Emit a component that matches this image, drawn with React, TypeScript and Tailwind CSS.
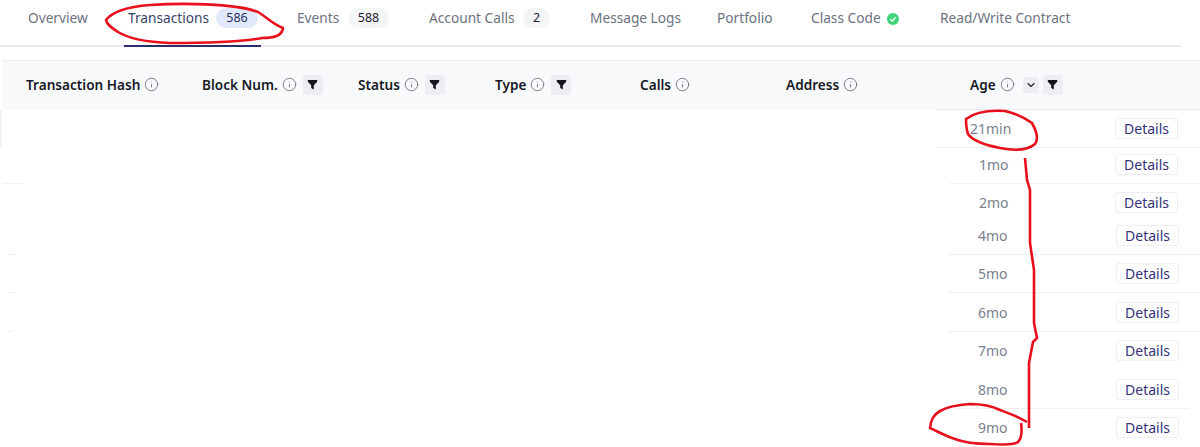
import { Info, ChevronDown } from "lucide-react";

const font = { fontFamily: '"Noto Sans", "Open Sans", sans-serif' };

function Funnel() {
  return (
    <span className="flex h-5 w-5 items-center justify-center rounded-[3px] bg-[#eceef2]">
      <svg width="11" height="11" viewBox="0 0 11 11">
        <path d="M0.8 1h9.4v1.8L6.8 6.2v4.3L4.2 9V6.2L0.8 2.8z" fill="#14161f" />
      </svg>
    </span>
  );
}

function Head({ label, filter, sort }: { label: string; filter?: boolean; sort?: boolean }) {
  return (
    <div className="flex items-center">
      <span className="text-[13.6px] font-semibold text-[#171a26]">{label}</span>
      <Info size={15} strokeWidth={1.4} className="ml-[4px] text-[#6b7080]" />
      {sort && (
        <span className="ml-[8px] flex h-4 w-4 items-center justify-center rounded-[3px] bg-[#eceef2]">
          <ChevronDown size={12} strokeWidth={2.2} className="text-[#1d2030]" />
        </span>
      )}
      {filter && <span className={sort ? "ml-1" : "ml-[6px]"}><Funnel /></span>}
    </div>
  );
}

function Count({ n, cls }: { n: string; cls: string }) {
  return <span className={`flex h-5 items-center justify-center rounded-full text-[12.5px] ${cls}`}>{n}</span>;
}

const rows = [
  { age: "21min", h: "h-[38px]", cls: "ml-[937px] border-b", txt: "ml-[33px]", btn: "mr-[22px]" },
  { age: "1mo", h: "h-[36px] pb-[2px]", cls: "ml-[950px] border-b", txt: "ml-[29px]", btn: "mr-[22px]" },
  { age: "2mo", h: "h-[37px]", cls: "ml-[950px]", txt: "ml-[29px]", btn: "mr-[22px]" },
  { age: "4mo", h: "h-[34px] pb-[4px]", cls: "ml-[949px] border-b", txt: "ml-[29px]", btn: "mr-[21px]" },
  { age: "5mo", h: "h-[38px]", cls: "ml-[949px] border-b", txt: "ml-[29px]", btn: "mr-[21px]" },
  { age: "6mo", h: "h-[39px]", cls: "ml-[949px] border-b", txt: "ml-[29px]", btn: "mr-[21px]" },
  { age: "7mo", h: "h-[39px] pb-[2px]", cls: "ml-[954px]", txt: "ml-[24px]", btn: "mr-[21px]" },
  { age: "8mo", h: "h-[38px]", cls: "ml-[954px] mr-[10px] border-b", txt: "ml-[24px]", btn: "mr-[11px]" },
  { age: "9mo", h: "h-[39px] pb-[2px]", cls: "ml-[949px]", txt: "ml-[29px]", btn: "mr-[21px]" },
];

export default function App() {
  return (
    <div className="relative h-[447px] w-[1200px] overflow-hidden bg-white" style={font}>
      <nav className="flex h-[47px] w-[1181px] gap-8 whitespace-nowrap border-b-2 border-[#e8e9ee] pl-6 text-[13.7px] text-[#6b7280]">
        <span className="w-[68px] px-1 pt-[8px]">Overview</span>
        <span className="-mb-[2px] flex h-[47px] w-[137px] items-start justify-between border-b-2 border-[#2b2f6e] pl-1 pr-[3px] pt-[8px] text-[#3a4468]">
          Transactions<Count n="586" cls="w-[42px] bg-[#e2e8fb] text-[#26305f]" />
        </span>
        <span className="flex w-[100px] items-start justify-between px-1 pt-[8px]">Events<Count n="588" cls="w-[41px] bg-[#f4f5f7] text-[#1d2030]" /></span>
        <span className="flex w-[129px] items-start justify-between px-1 pt-[8px]">Account Calls<Count n="2" cls="w-[27px] bg-[#f4f5f7] text-[#1d2030]" /></span>
        <span className="w-[95px] px-1 pt-[8px]">Message Logs</span>
        <span className="w-[62px] px-1 pt-[8px]">Portfolio</span>
        <span className="flex w-[97px] items-start justify-between pl-1 pr-[5px] pt-[8px]">
          Class Code
          <svg className="mt-[5px]" width="12" height="12" viewBox="0 0 12 12">
            <circle cx="6" cy="6" r="6" fill="#3ed47a" />
            <path d="M3.3 6.2l2 1.9 3.4-3.8" fill="none" stroke="#fff" strokeWidth="1.4" />
          </svg>
        </span>
        <span className="w-[139px] px-1 pt-[8px]">Read/Write Contract</span>
      </nav>

      <div className="ml-[2px] mt-[13px] grid h-[49px] grid-cols-[176px_156px_137px_145px_146px_184px_1fr] items-center border-t border-[#eff0f3] bg-[#f8f9fb] pl-6">
        <Head label="Transaction Hash" />
        <Head label="Block Num." filter />
        <Head label="Status" filter />
        <Head label="Type" filter />
        <Head label="Calls" />
        <Head label="Address" />
        <Head label="Age" sort filter />
      </div>

      <div className="ml-[937px] h-px bg-[#e8e9ee]" />
      <div>
        {rows.map((r) => (
          <div key={r.age} className={`flex items-center justify-between border-[#eceef1] ${r.h} ${r.cls}`}>
            <span className={`text-[14px] text-[#7b8190] ${r.txt}`}>{r.age}</span>
            <button className={`flex h-[21px] w-[63px] items-center justify-center rounded-[3px] border border-[#eceef2] bg-white text-[14px] text-[#35327a] ${r.btn}`}>
              Details
            </button>
          </div>
        ))}
      </div>

      <div className="absolute left-0 top-[109px] h-[39px] w-[2px] bg-[#f1f2f4]" />
      <div className="absolute left-[2px] top-[183px] h-px w-[21px] bg-[#eceef1]" />
      <div className="absolute left-[8px] top-[254px] h-px w-[8px] bg-[#eceef1]" />
      <div className="absolute left-[8px] top-[292px] h-px w-[8px] bg-[#eceef1]" />
      <div className="absolute left-[8px] top-[331px] h-px w-[5px] bg-[#eceef1]" />

      <svg className="pointer-events-none absolute inset-0" width="1200" height="447" viewBox="0 0 1200 447" fill="none" stroke="#e8101c" strokeWidth="2.6" strokeLinejoin="round">
        <path d="M106 20C112 12 125 7 150 5C180 3 235 3 258 12C268 18 272 24 283 28C282 36 274 38 262 38C240 42 200 43 170 43C145 42 128 38 118 32C112 28 107 25 106 20Z" />
        <path d="M966 119C975 112 990 110 1005 111C1018 114 1028 120 1032 123C1037 132 1038 140 1035 144C1028 150 1015 151 1000 148C985 145 972 140 968 134C966 128 966 123 966 119Z" />
        <path d="M1025 158L1027 180L1030 190L1030 243L1034 270L1034 323L1037 338L1033 342L1029 363L1029 428" />
        <path d="M1027 422C1015 415 1005 412 1000 410C990 405 980 404 970 404C955 405 947 407 940 411C933 415 931 420 930 428C937 431 945 436 955 439C965 443 977 444 990 444C1005 445 1015 445 1018 442C1022 438 1022 430 1021 423" />
      </svg>
    </div>
  );
}
